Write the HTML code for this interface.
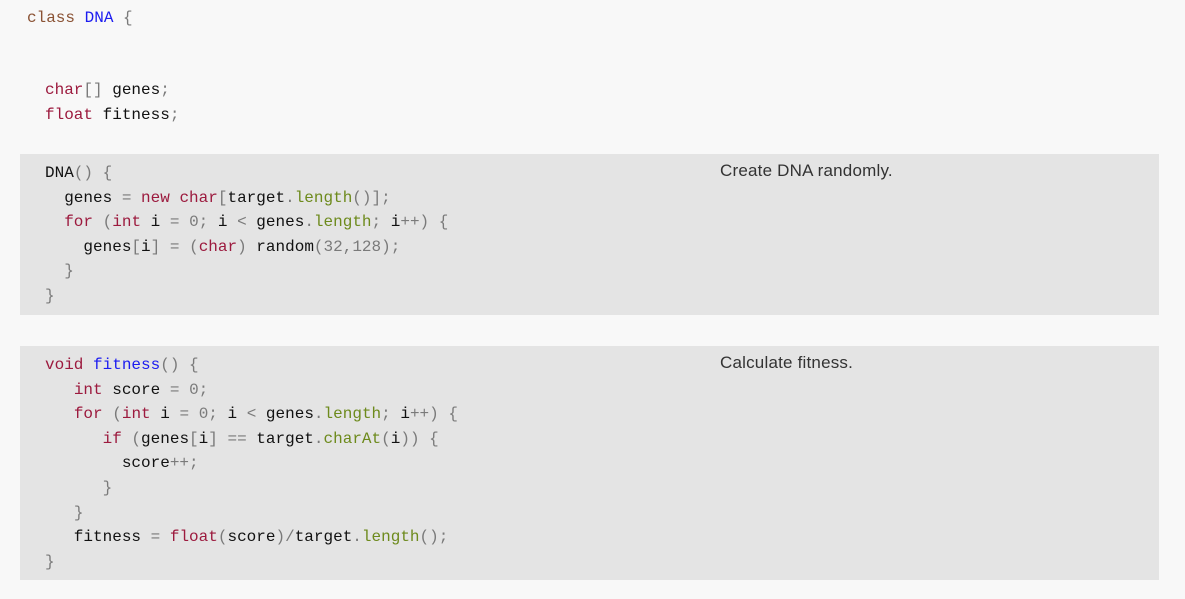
<!DOCTYPE html>
<html><head><style>
body{margin:0;background:#f8f8f8;width:1185px;height:599px;overflow:hidden;position:relative}
pre{margin:0;position:absolute;font-family:"Liberation Mono",monospace;font-size:16px;line-height:24.6px;color:#111}
.blk{position:absolute;left:20px;width:1139px;background:#e4e4e4}
.c{position:absolute;left:720px;font-family:"Liberation Sans",Arial,sans-serif;font-size:17px;color:#333;letter-spacing:0.2px}
.k{color:#9c1a3e}.cl{color:#8a5234}.b{color:#1c1cf0}.p{color:#7a7a7a}.m{color:#6d8a1c}
</style></head><body>
<pre style="left:27px;top:6px"><span class="cl">class</span> <span class="b">DNA</span> <span class="p">{</span></pre>
<pre style="left:45px;top:78px"><span class="k">char</span><span class="p">[]</span> genes<span class="p">;</span>
<span class="k">float</span> fitness<span class="p">;</span></pre>
<div class="blk" style="top:154px;height:161px"></div>
<pre style="left:45px;top:161px">DNA<span class="p">() {</span>
  genes <span class="p">=</span> <span class="k">new</span> <span class="k">char</span><span class="p">[</span>target<span class="p">.</span><span class="m">length</span><span class="p">()];</span>
  <span class="k">for</span> <span class="p">(</span><span class="k">int</span> i <span class="p">=</span> <span class="p">0;</span> i <span class="p">&lt;</span> genes<span class="p">.</span><span class="m">length</span><span class="p">;</span> i<span class="p">++)</span> <span class="p">{</span>
    genes<span class="p">[</span>i<span class="p">]</span> <span class="p">=</span> <span class="p">(</span><span class="k">char</span><span class="p">)</span> random<span class="p">(32,128);</span>
  <span class="p">}</span>
<span class="p">}</span></pre>
<div class="c" style="top:161px">Create DNA randomly.</div>
<div class="blk" style="top:346px;height:234px"></div>
<pre style="left:45px;top:353px"><span class="k">void</span> <span class="b">fitness</span><span class="p">() {</span>
   <span class="k">int</span> score <span class="p">=</span> <span class="p">0;</span>
   <span class="k">for</span> <span class="p">(</span><span class="k">int</span> i <span class="p">=</span> <span class="p">0;</span> i <span class="p">&lt;</span> genes<span class="p">.</span><span class="m">length</span><span class="p">;</span> i<span class="p">++)</span> <span class="p">{</span>
      <span class="k">if</span> <span class="p">(</span>genes<span class="p">[</span>i<span class="p">]</span> <span class="p">==</span> target<span class="p">.</span><span class="m">charAt</span><span class="p">(</span>i<span class="p">))</span> <span class="p">{</span>
        score<span class="p">++;</span>
      <span class="p">}</span>
   <span class="p">}</span>
   fitness <span class="p">=</span> <span class="k">float</span><span class="p">(</span>score<span class="p">)/</span>target<span class="p">.</span><span class="m">length</span><span class="p">();</span>
<span class="p">}</span></pre>
<div class="c" style="top:353px">Calculate fitness.</div>
</body></html>
